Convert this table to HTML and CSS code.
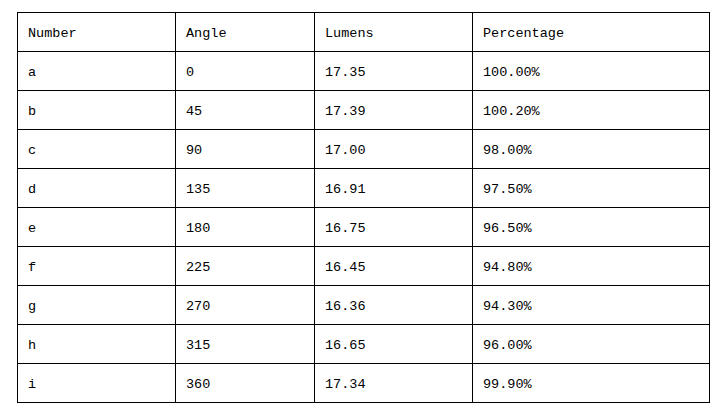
FILE: index.html
```html
<!DOCTYPE html>
<html>
<head>
<meta charset="utf-8">
<link rel="stylesheet" href="styles.css">
</head>
<body>
<table class="data">
  <colgroup>
    <col class="c1"><col class="c2"><col class="c3"><col class="c4">
  </colgroup>
  <tr><td>Number</td><td>Angle</td><td>Lumens</td><td>Percentage</td></tr>
  <tr><td>a</td><td>0</td><td>17.35</td><td>100.00%</td></tr>
  <tr><td>b</td><td>45</td><td>17.39</td><td>100.20%</td></tr>
  <tr><td>c</td><td>90</td><td>17.00</td><td>98.00%</td></tr>
  <tr><td>d</td><td>135</td><td>16.91</td><td>97.50%</td></tr>
  <tr><td>e</td><td>180</td><td>16.75</td><td>96.50%</td></tr>
  <tr><td>f</td><td>225</td><td>16.45</td><td>94.80%</td></tr>
  <tr><td>g</td><td>270</td><td>16.36</td><td>94.30%</td></tr>
  <tr><td>h</td><td>315</td><td>16.65</td><td>96.00%</td></tr>
  <tr><td>i</td><td>360</td><td>17.34</td><td>99.90%</td></tr>
</table>
</body>
</html>
```
FILE: styles.css
```css
html, body {
  margin: 0;
  padding: 0;
  background: #fff;
}
body {
  padding: 12px 0 0 17px;
}
.data {
  border-collapse: collapse;
  table-layout: fixed;
  width: 692px;
  font-family: "Liberation Mono", "DejaVu Sans Mono", monospace;
  font-size: 13.5px;
  color: #000;
}
.c1 { width: 158px; }
.c2 { width: 139px; }
.c3 { width: 158px; }
.c4 { width: 237px; }
.data td {
  border: 1px solid #000;
  height: 38px;
  padding: 4px 0 0 10px;
  box-sizing: border-box;
  vertical-align: middle;
  line-height: 14px;
  white-space: nowrap;
}
.data tr {
  height: 39px;
}
```
